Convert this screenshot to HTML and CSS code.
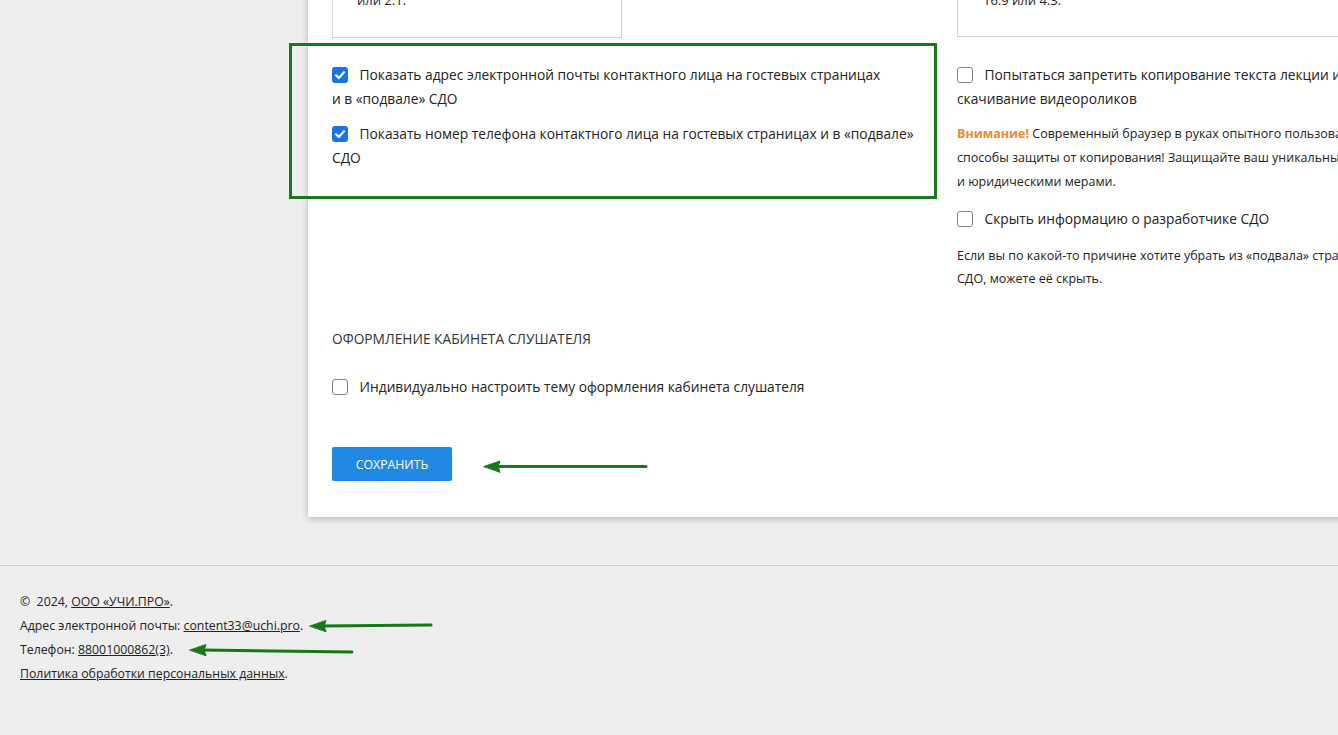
FILE: index.html
```html
<!DOCTYPE html>
<html lang="ru">
<head>
<meta charset="utf-8">
<title>Настройки СДО</title>
<link rel="stylesheet" href="styles.css">
</head>
<body>
<div class="page">
  <main class="wrap">
    <section class="card">
      <div class="cols">
        <div class="col col-left">
          <div class="ratio-box"><p>или 2:1.</p></div>
          <div class="group">
            <label class="check-row">
              <span class="box checked"><svg viewBox="0 0 16 16" width="16" height="16"><path d="M4 8.3 L6.8 11 L12 5.3" fill="none" stroke="#fff" stroke-width="2.2" stroke-linecap="round" stroke-linejoin="round"/></svg></span>
              <span class="label">Показать адрес электронной почты контактного лица на гостевых страницах<br>и в «подвале» СДО</span>
            </label>
            <label class="check-row">
              <span class="box checked"><svg viewBox="0 0 16 16" width="16" height="16"><path d="M4 8.3 L6.8 11 L12 5.3" fill="none" stroke="#fff" stroke-width="2.2" stroke-linecap="round" stroke-linejoin="round"/></svg></span>
              <span class="label">Показать номер телефона контактного лица на гостевых страницах и в «подвале»<br>СДО</span>
            </label>
          </div>
        </div>
        <div class="col col-right">
          <div class="ratio-box wide"><p>16:9 или 4:3.</p></div>
          <div class="group">
            <label class="check-row">
              <span class="box"></span>
              <span class="label">Попытаться запретить копирование текста лекции и<br>скачивание видеороликов</span>
            </label>
            <p class="note"><b class="warn">Внимание!</b> Современный браузер в руках опытного пользователя позволяет обойти любые<br>способы защиты от копирования! Защищайте ваш уникальный контент организационными<br>и юридическими мерами.</p>
            <label class="check-row">
              <span class="box"></span>
              <span class="label">Скрыть информацию о разработчике СДО</span>
            </label>
            <p class="note last">Если вы по какой-то причине хотите убрать из «подвала» страниц информацию о разработчике<br>СДО, можете её скрыть.</p>
          </div>
        </div>
      </div>

      <h3 class="section-title">Оформление кабинета слушателя</h3>
      <label class="check-row single">
        <span class="box"></span>
        <span class="label">Индивидуально настроить тему оформления кабинета слушателя</span>
      </label>

      <button class="save" type="button">Сохранить</button>
    </section>
  </main>

  <footer class="footer">
    <p>©&nbsp; 2024, <a href="#">ООО «УЧИ.ПРО»</a>.</p>
    <p>Адрес электронной почты: <a href="#">content33@uchi.pro</a>.</p>
    <p>Телефон: <a href="#">88001000862(3)</a>.</p>
    <p><a href="#">Политика обработки персональных данных</a>.</p>
  </footer>

  <svg class="annot" width="1338" height="735" viewBox="0 0 1338 735">
    <rect x="290.5" y="44.5" width="645" height="153" fill="none" stroke="#19781a" stroke-width="3"/>
    <g fill="#19781a" stroke="#19781a" stroke-linecap="round">
      <line x1="496" y1="466.5" x2="646" y2="466.5" stroke-width="3"/>
      <polygon points="484,466.5 500,461 498,466.5 500,472" stroke-width="1"/>
      <line x1="322" y1="626" x2="431" y2="625" stroke-width="3"/>
      <polygon points="310,626 326,620.5 324,626 326,631.5" stroke-width="1"/>
      <line x1="202" y1="650" x2="352" y2="652" stroke-width="3"/>
      <polygon points="190,650 206,644.5 204,650 206,655.5" stroke-width="1"/>
    </g>
  </svg>
</div>
</body>
</html>
```

FILE: styles.css
```css
html, body {
  margin: 0;
  padding: 0;
}

body {
  background: #eeeeee;
  font-family: "Open Sans", "Noto Sans", "Liberation Sans", sans-serif;
  color: #222;
  font-size: 14px;
  overflow: hidden;
}

.page {
  position: relative;
  width: 1338px;
  height: 735px;
  overflow: hidden;
}

.wrap {
  padding-left: 308px;
}

.card {
  background: #fff;
  width: 1100px;
  margin-top: -40px;
  padding: 0 0 36px 24px;
  box-shadow: 0 2px 7px rgba(0, 0, 0, 0.22);
}

.cols {
  display: flex;
  gap: 20px;
}

.col-left {
  width: 605px;
  flex: none;
}

.col-right {
  flex: 1;
}

.ratio-box {
  border: 1px solid #d2d2d2;
  border-top: none;
  width: 264px;
  padding: 28px 0 25px 24px;
  font-size: 13px;
  line-height: 24px;
}

.ratio-box.wide {
  width: auto;
  padding-left: 25px;
  padding-bottom: 24px;
}

.ratio-box p {
  margin: 0;
}

.group {
  display: flex;
  flex-direction: column;
  padding-top: 25px;
}

.col-left .group {
  gap: 11px;
}

.col-right .group {
  padding-top: 26px;
  gap: 11px;
  white-space: nowrap;
}

.check-row {
  display: block;
  line-height: 24px;
  font-size: 13.75px;
}

.box {
  display: inline-block;
  box-sizing: border-box;
  width: 16px;
  height: 16px;
  border: 1px solid #858585;
  border-radius: 3px;
  background: #fff;
  vertical-align: -3px;
  margin-right: 8px;
}

.box svg {
  display: block;
}

.box.checked {
  border: none;
  background: #1a73e8;
}

.note {
  margin: 0;
  font-size: 12.5px;
  line-height: 24px;
}

.col-right .note + .check-row {
  margin-top: 2px;
}

.note.last {
  line-height: 23px;
  margin-top: 2px;
}

.warn {
  color: #f5872a;
  font-weight: 700;
}

.section-title {
  margin: 37px 0 0;
  font-size: 13.75px;
  font-weight: 400;
  text-transform: uppercase;
  line-height: 24px;
  color: #333;
}

.check-row.single {
  margin-top: 24px;
}

.save {
  display: block;
  margin-top: 48px;
  width: 120px;
  height: 34px;
  border: none;
  border-radius: 2px;
  background: #2189e4;
  color: #fff;
  font-family: "Open Sans", "Noto Sans", "Liberation Sans", sans-serif;
  font-size: 12.3px;
  font-weight: 500;
  text-transform: uppercase;
  padding: 0;
}

.footer {
  margin-top: 48px;
  border-top: 1px solid #cccccc;
  padding: 24px 20px 0;
  font-size: 12.3px;
  line-height: 24px;
}

.footer p {
  margin: 0;
}

.footer a {
  color: #222;
  text-decoration: underline;
}

.annot {
  position: absolute;
  left: 0;
  top: 0;
  pointer-events: none;
}
```
